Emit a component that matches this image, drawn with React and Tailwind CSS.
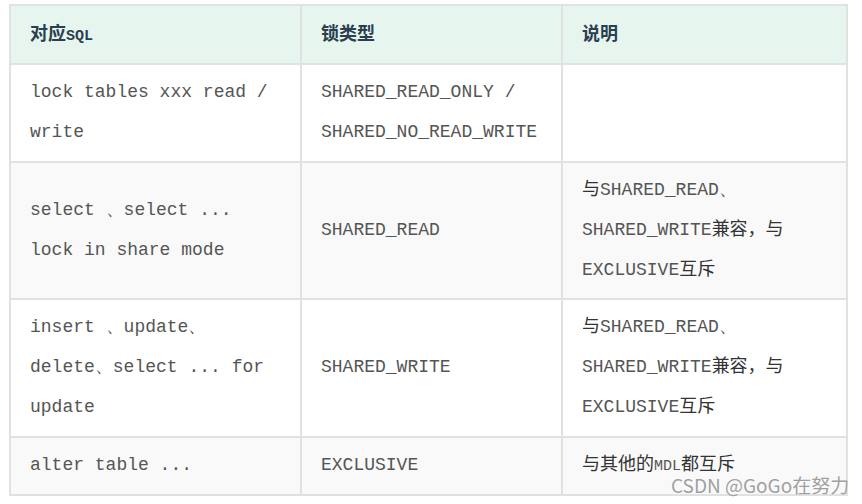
import React from 'react';

const mono = "font-['Liberation_Mono','Courier_New',monospace] text-[#555]";
const cjk = "font-['Noto_Sans_CJK_SC','Noto_Sans',sans-serif] text-[#333]";

function M({ children }) {
  return <span className={`${mono} leading-none`}>{children}</span>;
}

function C({ children }) {
  return <span className={`${cjk} leading-none`}>{children}</span>;
}

function Lines({ lines }) {
  return lines.map((l, i) => (
    <div key={i} className="whitespace-pre h-[40px] leading-[40px]">{l}</div>
  ));
}

const rows = [
  {
    bg: 'bg-white',
    pad: 'pt-[7px] pb-[9px]',
    sql: ['lock tables xxx read /', 'write'],
    lock: ['SHARED_READ_ONLY /', 'SHARED_NO_READ_WRITE'],
    desc: [],
  },
  {
    bg: 'bg-[#f9f9f9]',
    pad: 'pt-[7px] pb-[8px]',
    sql: ['select 、select ...', 'lock in share mode'],
    lock: ['SHARED_READ'],
    desc: [
      <><C>与</C><M>SHARED_READ、</M></>,
      <><M>SHARED_WRITE</M><C>兼容，与</C></>,
      <><M>EXCLUSIVE</M><C>互斥</C></>,
    ],
  },
  {
    bg: 'bg-white',
    pad: 'pt-[7px] pb-[9px]',
    sql: ['insert 、update、', 'delete、select ... for', 'update'],
    lock: ['SHARED_WRITE'],
    desc: [
      <><C>与</C><M>SHARED_READ、</M></>,
      <><M>SHARED_WRITE</M><C>兼容，与</C></>,
      <><M>EXCLUSIVE</M><C>互斥</C></>,
    ],
  },
  {
    bg: 'bg-[#f9f9f9]',
    pad: 'pt-[7px] pb-[9px]',
    sql: ['alter table ...'],
    lock: ['EXCLUSIVE'],
    desc: [
      <><C>与其他的</C><M><span className="text-[15px]">MDL</span></M><C>都互斥</C></>,
    ],
  },
];

export default function App() {
  return (
    <div className="relative w-[862px] h-[504px] bg-white overflow-hidden">
      <div className="pl-[9px] pt-[4px]">
        <table className="table-fixed border-collapse w-[837px] text-[18px] leading-[40px]">
          <colgroup>
            <col className="w-[291px]" />
            <col className="w-[261px]" />
            <col className="w-[285px]" />
          </colgroup>
          <thead>
            <tr className="bg-[#e6f6ee] h-[59px]">
              <th className="border-2 border-[#dfe2e5] text-left px-[19px] pb-[3px] align-middle font-bold text-[#2c3e50]">
                <span className="font-['Noto_Sans_CJK_SC',sans-serif] leading-none">对应</span>
                <span className="font-['Liberation_Mono',monospace] text-[15px] leading-none">SQL</span>
              </th>
              <th className="border-2 border-[#dfe2e5] text-left px-[19px] pb-[3px] align-middle font-bold text-[#2c3e50]">
                <span className="font-['Noto_Sans_CJK_SC',sans-serif] leading-none">锁类型</span>
              </th>
              <th className="border-2 border-[#dfe2e5] text-left px-[19px] pb-[3px] align-middle font-bold text-[#2c3e50]">
                <span className="font-['Noto_Sans_CJK_SC',sans-serif] leading-none">说明</span>
              </th>
            </tr>
          </thead>
          <tbody>
            {rows.map((r, i) => (
              <tr key={i} className={r.bg}>
                <td className={`border-2 border-[#dfe2e5] px-[19px] ${r.pad} align-middle ${mono}`}>
                  <Lines lines={r.sql} />
                </td>
                <td className={`border-2 border-[#dfe2e5] px-[19px] ${r.pad} align-middle ${mono}`}>
                  <Lines lines={r.lock} />
                </td>
                <td className={`border-2 border-[#dfe2e5] px-[19px] ${r.pad} align-middle ${mono}`}>
                  <Lines lines={r.desc} />
                </td>
              </tr>
            ))}
          </tbody>
        </table>
      </div>
      <div className="absolute left-[671px] top-[473px] text-[19px] leading-[24px] text-[#a0a0a0] font-['Noto_Sans_CJK_SC','Noto_Sans',sans-serif] whitespace-nowrap [text-shadow:0_0_2px_#fff]">
        CSDN @GoGo在努力
      </div>
    </div>
  );
}
